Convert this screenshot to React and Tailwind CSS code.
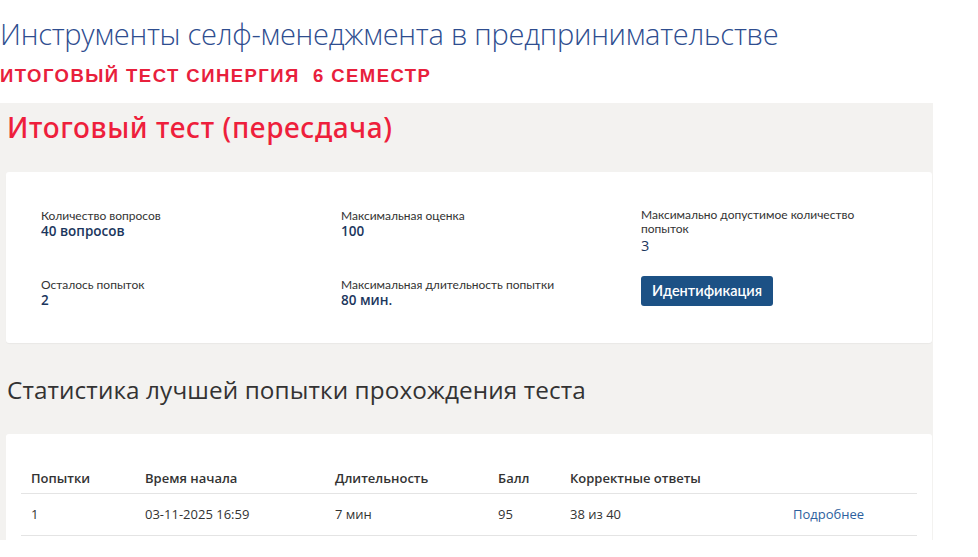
export default function App() {
  const label = "font-['Lato',sans-serif] text-[12px] leading-[15px] text-[#333333]";
  const value = "font-['Open_Sans',sans-serif] text-[13.5px] leading-[17px] font-semibold text-[#1b365d]";
  const cols = "grid grid-cols-[114px_190px_163px_72px_223px_134px] items-center border-b border-[#e4e4e4] pl-[10px] text-[13px] text-[#333333]";
  return (
    <div className="w-[978px] h-[557px] bg-white overflow-hidden font-['Open_Sans','Noto_Sans',sans-serif]">
      <div className="pt-[14px] h-[62px]">
        <div className="text-[29px] leading-[40px] font-light text-[#2e4d8f] tracking-[-0.25px] whitespace-nowrap">
          Инструменты селф-менеджмента в предпринимательстве
        </div>
      </div>
      <div className="h-[41px] pt-[3px]">
        <div className="font-['Liberation_Sans',Arial,sans-serif] text-[18.5px] leading-[22px] font-bold text-[#e8203c] tracking-[1.45px] whitespace-nowrap">
          ИТОГОВЫЙ ТЕСТ СИНЕРГИЯ&nbsp; 6 СЕМЕСТР
        </div>
      </div>
      <div className="w-[933px] h-[437px] bg-[#f3f2f0] px-[6px] pt-[5px]">
        <div className="pl-[1px] h-[64px]">
          <div className="font-['Noto_Sans',sans-serif] text-[28px] leading-[38px] font-medium text-[#ee1f3c] tracking-[0.6px]">
            Итоговый тест (пересдача)
          </div>
        </div>
        <div className="bg-white rounded-[3px] h-[171px] w-[926px] pl-[35px] pt-[36px] shadow-[0_1px_1px_rgba(0,0,0,0.04)]">
          <div className="grid grid-cols-[300px_300px_260px]">
            <div className="flex flex-col gap-[37px]">
              <div>
                <div className={label}>Количество вопросов</div>
                <div className={value}>40 вопросов</div>
              </div>
              <div>
                <div className={label}>Осталось попыток</div>
                <div className={value}>2</div>
              </div>
            </div>
            <div className="flex flex-col gap-[37px]">
              <div>
                <div className={label}>Максимальная оценка</div>
                <div className={value}>100</div>
              </div>
              <div>
                <div className={label}>Максимальная длительность попытки</div>
                <div className={value}>80 мин.</div>
              </div>
            </div>
            <div className="flex flex-col">
              <div className="w-[240px]">
                <div className="font-['Lato',sans-serif] text-[12px] leading-[14px] text-[#333333]">Максимально допустимое количество попыток</div>
                <div className="mt-[1px] text-[14.5px] leading-[18px] font-medium text-[#1b365d]">3</div>
              </div>
              <button className="mt-[21px] w-[132px] h-[30px] rounded-[3px] bg-[#1c5185] text-white font-['Lato',sans-serif] text-[14.5px] font-semibold leading-[30px] text-center">
                Идентификация
              </button>
            </div>
          </div>
        </div>
        <div className="h-[91px] pt-[31px] pl-[1px]">
          <div className="text-[24.3px] leading-[32px] text-[#333333] tracking-[0.1px]">
            Статистика лучшей попытки прохождения теста
          </div>
        </div>
        <div className="bg-white rounded-t-[3px] h-[106px] w-[926px] px-[15px] pt-[30px]">
          <div className={cols + " h-[30px] font-semibold"}>
            <div>Попытки</div>
            <div>Время начала</div>
            <div>Длительность</div>
            <div>Балл</div>
            <div>Корректные ответы</div>
            <div></div>
          </div>
          <div className={cols + " h-[42px]"}>
            <div>1</div>
            <div>03-11-2025 16:59</div>
            <div>7 мин</div>
            <div>95</div>
            <div>38 из 40</div>
            <div className="text-[#2d5f9e]">Подробнее</div>
          </div>
        </div>
      </div>
    </div>
  );
}
